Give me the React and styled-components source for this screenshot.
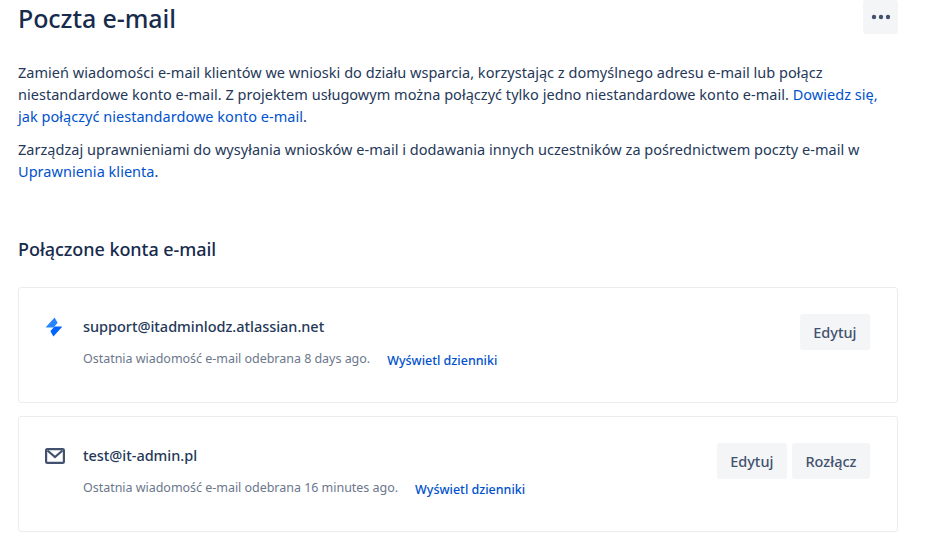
import React from 'react';
import styled, { createGlobalStyle } from 'styled-components';

const GlobalStyle = createGlobalStyle`
  html, body {
    margin: 0;
    padding: 0;
    background: #fff;
    overflow: hidden;
    font-family: "Noto Sans", "Open Sans", sans-serif;
    color: #172b4d;
  }
`;

const Page = styled.div`
  width: 880px;
  padding-left: 18px;
`;

const Header = styled.div`
  display: flex;
  justify-content: space-between;
  align-items: flex-start;
  height: 34px;
`;

const Title = styled.h1`
  margin: 0;
  font-size: 25px;
  line-height: 36px;
  font-weight: 500;
  letter-spacing: -0.08px;
  color: #172b4d;
`;

const MoreButton = styled.button`
  width: 35px;
  height: 34px;
  border: 0;
  padding: 0;
  border-radius: 3px;
  background: #f4f5f7;
  color: #42526e;
  display: flex;
  align-items: center;
  justify-content: center;
`;

const Intro = styled.div`
  margin-top: 27px;
`;

const Para = styled.p`
  margin: 0 0 11px;
  font-size: 14.5px;
  line-height: 22px;
  letter-spacing: 0.03px;
  color: #253858;
`;

const Link = styled.a`
  color: #0052cc;
  text-decoration: none;
`;

const SectionTitle = styled.h2`
  margin: 55px 0 26px;
  font-size: 18px;
  line-height: 24px;
  font-weight: 500;
  letter-spacing: -0.05px;
  color: #172b4d;
`;

const CardList = styled.div`
  display: flex;
  flex-direction: column;
  gap: 13px;
`;

const Card = styled.div`
  box-sizing: border-box;
  height: 116px;
  border: 1px solid #ebecf0;
  border-radius: 3px;
  padding: 26px 27px 0 26px;
  display: flex;
  align-items: flex-start;
`;

const IconCol = styled.div`
  width: 38px;
  height: 24px;
  margin-top: 1px;
  flex: none;
  display: flex;
  align-items: center;
`;

const Body = styled.div`
  flex: 1;
  min-width: 0;
  padding-top: 2px;
`;

const Email = styled.div`
  font-size: 14.5px;
  line-height: 20px;
  font-weight: 500;
  letter-spacing: -0.03px;
  color: #253858;
`;

const MetaRow = styled.div`
  display: flex;
  align-items: flex-start;
  gap: 17px;
  margin-top: 13px;
`;

const Meta = styled.span`
  font-size: 12.5px;
  line-height: 20px;
  letter-spacing: -0.03px;
  color: #6b778c;
`;

const LogLink = styled.a`
  font-size: 12.5px;
  line-height: 20px;
  margin-top: 2px;
  font-weight: 500;
  color: #0052cc;
  text-decoration: none;
`;

const Actions = styled.div`
  display: flex;
  gap: 5px;
  flex: none;
`;

const Button = styled.button`
  height: 36px;
  padding: 0 13.5px;
  border: 0;
  border-radius: 3px;
  background: #f4f5f7;
  color: #42526e;
  font-family: inherit;
  font-size: 14.5px;
  font-weight: 500;
`;

const Dots = () => (
  <svg width="24" height="24" viewBox="0 0 24 24" fill="currentColor">
    <circle cx="5" cy="12" r="2.2" />
    <circle cx="12" cy="12" r="2.2" />
    <circle cx="19" cy="12" r="2.2" />
  </svg>
);

const BoltIcon = () => (
  <svg width="20" height="20" viewBox="0 0 20 20" style={{ marginLeft: -1 }}>
    <path d="M10.6.6 2.2 9.7c-.3.4-.1.8.4.8h6.9l3.8-4.3c.2-.2.2-.4.1-.6L10.6.6z" fill="#2684ff" />
    <path d="M9.4 19.4l8.4-9.1c.3-.4.1-.8-.4-.8h-6.9l-3.8 4.3c-.2.2-.2.4-.1.6l2.8 5z" fill="#0065ff" />
  </svg>
);

const MailIcon = () => (
  <svg width="20" height="16" viewBox="0 0 20 16" fill="none" stroke="#42526e">
    <rect x="1.1" y="1.1" width="17.8" height="13.8" rx="1.2" strokeWidth="2.2" />
    <path d="M2.5 2.5 10 9l7.5-6.5" strokeWidth="2.2" />
  </svg>
);

const accounts = [
  {
    email: 'support@itadminlodz.atlassian.net',
    meta: 'Ostatnia wiadomość e-mail odebrana 8 days ago.',
    icon: <BoltIcon />,
    actions: ['Edytuj'],
  },
  {
    email: 'test@it-admin.pl',
    meta: 'Ostatnia wiadomość e-mail odebrana 16 minutes ago.',
    icon: <MailIcon />,
    actions: ['Edytuj', 'Rozłącz'],
  },
];

export default function App() {
  return (
    <Page>
      <GlobalStyle />
      <Header>
        <Title>Poczta e-mail</Title>
        <MoreButton><Dots /></MoreButton>
      </Header>
      <Intro>
        <Para>
          Zamień wiadomości e-mail klientów we wnioski do działu wsparcia, korzystając z domyślnego adresu e-mail lub połącz
          niestandardowe konto e-mail. Z projektem usługowym można połączyć tylko jedno niestandardowe konto e-mail.{' '}
          <Link href="#">Dowiedz się, jak połączyć niestandardowe konto e-mail</Link>.
        </Para>
        <Para>
          Zarządzaj uprawnieniami do wysyłania wniosków e-mail i dodawania innych uczestników za pośrednictwem poczty e-mail w{' '}
          <Link href="#">Uprawnienia klienta</Link>.
        </Para>
      </Intro>
      <SectionTitle>Połączone konta e-mail</SectionTitle>
      <CardList>
        {accounts.map((a) => (
          <Card key={a.email}>
            <IconCol>{a.icon}</IconCol>
            <Body>
              <Email>{a.email}</Email>
              <MetaRow>
                <Meta>{a.meta}</Meta>
                <LogLink href="#">Wyświetl dzienniki</LogLink>
              </MetaRow>
            </Body>
            <Actions>
              {a.actions.map((label) => <Button key={label}>{label}</Button>)}
            </Actions>
          </Card>
        ))}
      </CardList>
    </Page>
  );
}
